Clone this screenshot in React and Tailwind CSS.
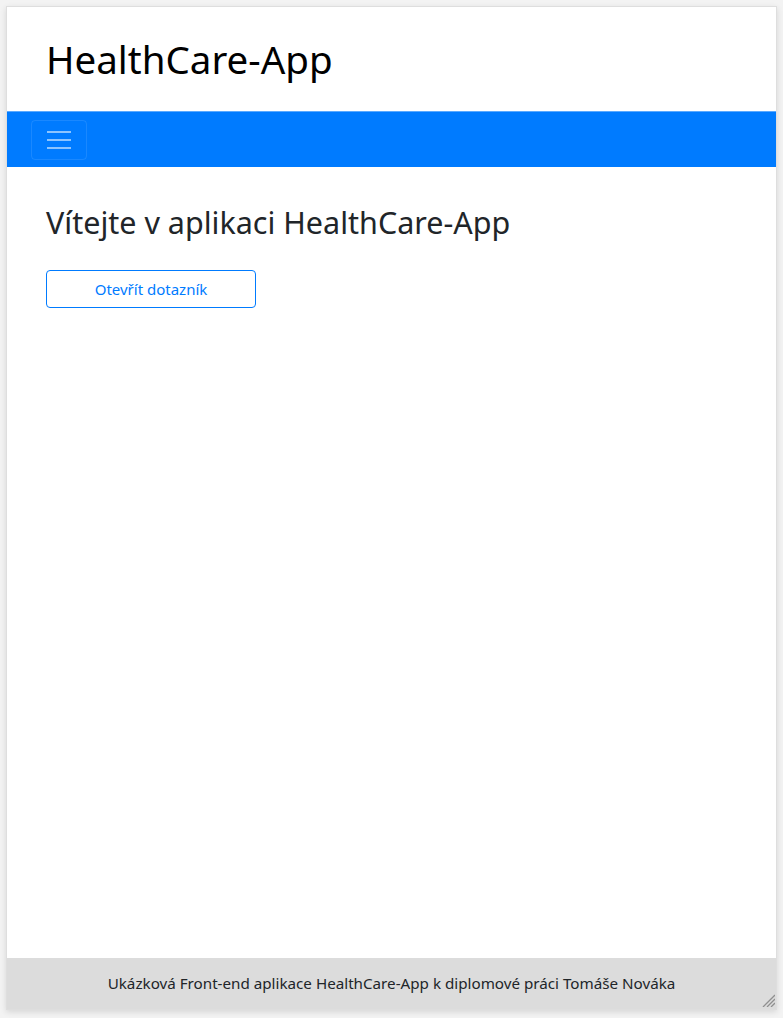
export default function App() {
  return (
    <div className="min-h-[1018px] bg-[#f3f3f3] p-[6px]" style={{ fontFamily: '"Noto Sans", "Open Sans", sans-serif' }}>
      <div className="flex h-[1004px] w-[771px] flex-col border border-[#dedede] bg-white shadow-[0_2px_6px_rgba(0,0,0,0.12)]">
        <header className="flex h-[104px] items-center px-[39px]">
          <h1 className="text-[38.5px] leading-none text-black">HealthCare-App</h1>
        </header>
        <nav className="flex h-[56px] items-center border-t border-[#5aa9ff] bg-[#007bff] px-[24px]">
          <button className="flex h-[40px] w-[56px] flex-col items-center justify-center gap-[6px] rounded-[4px] border border-white/10">
            <span className="block h-[2px] w-[24px] bg-white/55" />
            <span className="block h-[2px] w-[24px] bg-white/55" />
            <span className="block h-[2px] w-[24px] bg-white/55" />
          </button>
        </nav>
        <main className="flex-1 px-[39px] pt-[36px]">
          <h2 className="text-[30.5px] leading-[38px] text-[#212529]">Vítejte v aplikaci HealthCare-App</h2>
          <button className="mt-[29px] h-[38px] w-[210px] rounded-[4px] border border-[#007bff] text-[15px] text-[#007bff]">
            Otevřít dotazník
          </button>
        </main>
        <footer className="relative flex h-[51px] items-center justify-center bg-[#dcdcdc] text-[15.2px] text-[#212529]">
          Ukázková Front-end aplikace HealthCare-App k diplomové práci Tomáše Nováka
          <svg className="absolute bottom-[2px] right-[1px]" width="13" height="13" viewBox="0 0 13 13">
            <path d="M13 1 L1 13 M13 5 L5 13 M13 9 L9 13" stroke="#8f8f8f" strokeWidth="1.3" />
          </svg>
        </footer>
      </div>
    </div>
  );
}
